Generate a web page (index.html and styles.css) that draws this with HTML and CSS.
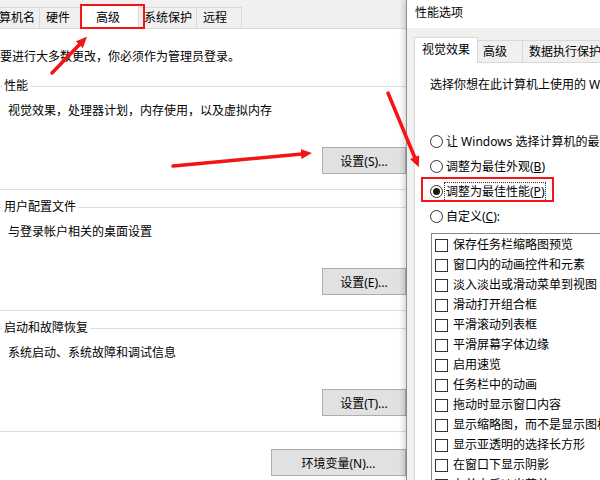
FILE: index.html
```html
<!DOCTYPE html>
<html lang="zh-CN">
<head>
    <meta charset="UTF-8">
    <title>系统属性 - 性能选项</title>
    <link rel="stylesheet" href="styles.css">
</head>
<body>
    <div class="screen">
        <!-- 系统属性窗口（左） -->
        <div class="sys-props">
            <div class="tabs">
                <div class="tab tab-cut">计算机名</div>
                <div class="tab tab-hw">硬件</div>
                <div class="tab tab-active">高级</div>
                <div class="tab tab-sp">系统保护</div>
                <div class="tab tab-remote">远程</div>
            </div>
            <div class="sys-body">
                <p class="notice">要进行大多数更改，你必须作为管理员登录。</p>

                <fieldset class="group">
                    <legend>性能</legend>
                    <p class="group-desc">视觉效果，处理器计划，内存使用，以及虚拟内存</p>
                    <div class="group-actions"><button class="btn">设置(S)...</button></div>
                </fieldset>

                <fieldset class="group">
                    <legend>用户配置文件</legend>
                    <p class="group-desc">与登录帐户相关的桌面设置</p>
                    <div class="group-actions"><button class="btn">设置(E)...</button></div>
                </fieldset>

                <fieldset class="group">
                    <legend>启动和故障恢复</legend>
                    <p class="group-desc">系统启动、系统故障和调试信息</p>
                    <div class="group-actions"><button class="btn">设置(T)...</button></div>
                </fieldset>

                <div class="env-row"><button class="btn btn-wide">环境变量(N)...</button></div>
            </div>
        </div>

        <!-- 性能选项对话框（右） -->
        <div class="perf-dialog">
            <div class="dlg-title">性能选项</div>
            <div class="dlg-body">
                <div class="dlg-tabs">
                    <div class="dlg-tab dlg-tab-active">视觉效果</div>
                    <div class="dlg-tab dlg-tab-adv">高级</div>
                    <div class="dlg-tab">数据执行保护</div>
                </div>
                <div class="dlg-panel">
                    <p class="dlg-intro">选择你想在此计算机上使用的 Windows 外观和性能设置。</p>
                    <div class="radio-list">
                        <div class="radio"><span class="radio-dot"></span><span>让 Windows 选择计算机的最佳设置(<u>L</u>)</span></div>
                        <div class="radio"><span class="radio-dot"></span><span>调整为最佳外观(<u>B</u>)</span></div>
                        <div class="radio radio-checked"><span class="radio-dot"></span><span class="focus-ring">调整为最佳性能(<u>P</u>)</span></div>
                        <div class="radio"><span class="radio-dot"></span><span>自定义(<u>C</u>):</span></div>
                    </div>
                    <div class="listbox">
                        <div class="check-item"><span class="check-box"></span>保存任务栏缩略图预览</div>
                        <div class="check-item"><span class="check-box"></span>窗口内的动画控件和元素</div>
                        <div class="check-item"><span class="check-box"></span>淡入淡出或滑动菜单到视图</div>
                        <div class="check-item"><span class="check-box"></span>滑动打开组合框</div>
                        <div class="check-item"><span class="check-box"></span>平滑滚动列表框</div>
                        <div class="check-item"><span class="check-box"></span>平滑屏幕字体边缘</div>
                        <div class="check-item"><span class="check-box"></span>启用速览</div>
                        <div class="check-item"><span class="check-box"></span>任务栏中的动画</div>
                        <div class="check-item"><span class="check-box"></span>拖动时显示窗口内容</div>
                        <div class="check-item"><span class="check-box"></span>显示缩略图，而不是显示图标</div>
                        <div class="check-item"><span class="check-box"></span>显示亚透明的选择长方形</div>
                        <div class="check-item"><span class="check-box"></span>在窗口下显示阴影</div>
                        <div class="check-item"><span class="check-box"></span>在单击后淡出菜单</div>
                    </div>
                </div>
            </div>
        </div>

        <!-- 红色标注 -->
        <svg class="marks" width="600" height="480" viewBox="0 0 600 480">
            <defs>
                <marker id="head" markerUnits="userSpaceOnUse" markerWidth="11" markerHeight="10" refX="1" refY="5" orient="auto">
                    <path d="M0,0 L11,5 L0,10 z" fill="#f51414"/>
                </marker>
            </defs>
            <rect x="81" y="5" width="63" height="23" fill="none" stroke="#f51414" stroke-width="2"/>
            <rect x="422" y="178" width="131" height="23" fill="none" stroke="#f51414" stroke-width="2"/>
            <line x1="52" y1="73" x2="80" y2="44" stroke="#f51414" stroke-width="3.5" stroke-linecap="round" marker-end="url(#head)"/>
            <line x1="173" y1="166" x2="302" y2="154" stroke="#f51414" stroke-width="3.5" stroke-linecap="round" marker-end="url(#head)"/>
            <line x1="388" y1="93" x2="415" y2="158" stroke="#f51414" stroke-width="3.5" stroke-linecap="round" marker-end="url(#head)"/>
        </svg>
    </div>
</body>
</html>
```

FILE: styles.css
```css
* {
    box-sizing: border-box;
}
body {
    margin: 0;
    width: 600px;
    height: 480px;
    overflow: hidden;
    font-family: "Noto Sans", "Noto Sans CJK SC", sans-serif;
    font-size: 12px;
    line-height: 16px;
    color: #000;
    background-color: #fff;
}
p {
    margin: 0;
}
.screen {
    position: relative;
    display: flex;
    height: 480px;
}

/* 系统属性 */
.sys-props {
    flex: none;
    width: 406px;
    overflow: hidden;
    background-color: #fff;
}
.tabs {
    display: flex;
    align-items: flex-end;
    height: 29px;
    background-color: #f0f0f0;
    border-bottom: 1px solid #d9d9d9;
}
.tab {
    flex: none;
    height: 21px;
    line-height: 20px;
    padding-left: 6px;
    border-top: 1px solid #d9d9d9;
    border-right: 1px solid #d9d9d9;
    background-color: #f0f0f0;
    white-space: nowrap;
    overflow: hidden;
}
.tab-cut {
    width: 59px;
    margin-left: -19px;
}
.tab-hw {
    width: 41px;
}
.tab-active {
    position: relative;
    width: 58px;
    height: 24px;
    line-height: 23px;
    margin-bottom: -1px;
    padding-left: 14px;
    border-left: 1px solid #d9d9d9;
    background-color: #fff;
}
.tab-sp {
    width: 58px;
    padding-left: 5px;
}
.tab-remote {
    width: 45px;
}
.sys-body {
    padding-top: 20px;
}
.notice {
    margin-bottom: 13px;
    white-space: nowrap;
}
.group {
    min-width: 0;
    margin: 0 -10px;
    padding: 0 9px 15px 0;
    border: 1px solid #dcdcdc;
}
.group + .group {
    margin-top: 9px;
}
.group legend {
    margin-left: 11px;
    padding: 0 2px;
    white-space: nowrap;
}
.group-desc {
    margin: 9px 0 0 17px;
    white-space: nowrap;
}
.group-actions {
    display: flex;
    justify-content: flex-end;
    margin-top: 28px;
}
.btn {
    width: 84px;
    height: 27px;
    padding: 0;
    font-family: inherit;
    font-size: 12px;
    color: #000;
    background-color: #e1e1e1;
    border: 1px solid #adadad;
    white-space: nowrap;
}
.btn-wide {
    width: 135px;
}
.env-row {
    display: flex;
    justify-content: flex-end;
    margin-top: 17px;
}

/* 性能选项 */
.perf-dialog {
    position: relative;
    flex: none;
    width: 194px;
    overflow: hidden;
    background-color: #f0f0f0;
    border-left: 1px solid #8e8e8e;
    box-shadow: -3px 0 5px rgba(0, 0, 0, 0.14);
}
.dlg-title {
    height: 28px;
    padding-left: 8px;
    line-height: 26px;
    background-color: #fff;
    white-space: nowrap;
}
.dlg-body {
    width: 420px;
    padding: 9px 0 0 7px;
}
.dlg-tabs {
    display: flex;
    align-items: flex-end;
    height: 25px;
}
.dlg-tab {
    flex: none;
    height: 22px;
    line-height: 21px;
    padding-left: 6px;
    padding-right: 6px;
    border-top: 1px solid #d9d9d9;
    border-right: 1px solid #d9d9d9;
    background-color: #f0f0f0;
    white-space: nowrap;
}
.dlg-tab-active {
    position: relative;
    height: 26px;
    line-height: 24px;
    margin-bottom: -1px;
    padding: 0 7px;
    border-left: 1px solid #d9d9d9;
    background-color: #fff;
}
.dlg-tab-adv {
    width: 45px;
    padding-left: 5px;
}
.dlg-panel {
    height: 460px;
    padding: 14px 0 0 15px;
    background-color: #fff;
    border: 1px solid #d9d9d9;
}
.dlg-intro {
    white-space: nowrap;
}
.radio-list {
    margin-top: 36px;
}
.radio {
    display: flex;
    align-items: center;
    height: 25px;
    white-space: nowrap;
}
.radio-dot {
    flex: none;
    display: flex;
    align-items: center;
    justify-content: center;
    width: 13px;
    height: 13px;
    margin-right: 3px;
    border: 1px solid #333;
    border-radius: 50%;
    background-color: #fff;
}
.radio-checked .radio-dot::after {
    content: "";
    width: 7px;
    height: 7px;
    border-radius: 50%;
    background-color: #1a1a1a;
}
.focus-ring {
    outline: 1px dotted #333;
    outline-offset: 1px;
}
.listbox {
    margin: 4px 0 0 1px;
    padding: 1px 0 0 3px;
    border: 1px solid #828790;
    background-color: #fff;
}
.check-item {
    display: flex;
    align-items: center;
    height: 20px;
    white-space: nowrap;
}
.check-box {
    flex: none;
    width: 13px;
    height: 13px;
    margin-right: 5px;
    border: 1px solid #333;
    background-color: #fff;
}

/* 标注 */
.marks {
    position: absolute;
    left: 0;
    top: 0;
    z-index: 2;
    pointer-events: none;
}
```
